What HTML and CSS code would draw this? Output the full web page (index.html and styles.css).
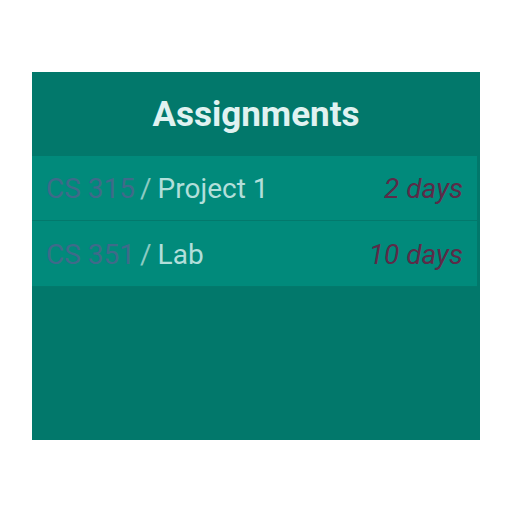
FILE: index.html
```html
<!DOCTYPE html>
<html>
<head>
<meta charset="utf-8">
<link rel="stylesheet" href="styles.css">
</head>
<body>
<div class="page">
  <section class="panel">
    <header class="panel-header"><h1 class="title">Assignments</h1></header>
    <ul class="list">
      <li class="item">
        <span class="name"><span class="course">CS 315</span><span class="sep">/</span><span class="task">Project 1</span></span>
        <span class="due">2 days</span>
      </li>
      <li class="item">
        <span class="name"><span class="course">CS 351</span><span class="sep">/</span><span class="task">Lab</span></span>
        <span class="due">10 days</span>
      </li>
    </ul>
  </section>
</div>
</body>
</html>
```

FILE: styles.css
```css
html, body {
  margin: 0;
  padding: 0;
  background: #ffffff;
}
.page {
  padding: 72px 32px;
}
.panel {
  width: 448px;
  height: 368px;
  background: #02786b;
  font-family: Roboto, "Noto Sans", sans-serif;
}
.panel-header {
  height: 84px;
  display: flex;
  align-items: center;
  justify-content: center;
}
.title {
  margin: 0;
  font-size: 35px;
  line-height: 40px;
  font-weight: 700;
  color: #e0f2f1;
  padding: 2px 0 0 0;
}
.list {
  list-style: none;
  margin: 0 3px 0 0;
  padding: 0;
}
.item {
  box-sizing: border-box;
  height: 65px;
  display: flex;
  align-items: center;
  justify-content: space-between;
  padding: 0 14px;
  background: #018a7b;
  border-bottom: 1px solid #03796c;
  font-size: 28px;
}
.item + .item {
  height: 66px;
  padding-top: 2px;
}
.course {
  color: #3f6a8a;
}
.sep {
  color: #8ccac2;
  margin: 0 6px 0 5px;
}
.task {
  color: #b2dfda;
}
.due {
  font-style: italic;
  color: #5c2b48;
}
```
